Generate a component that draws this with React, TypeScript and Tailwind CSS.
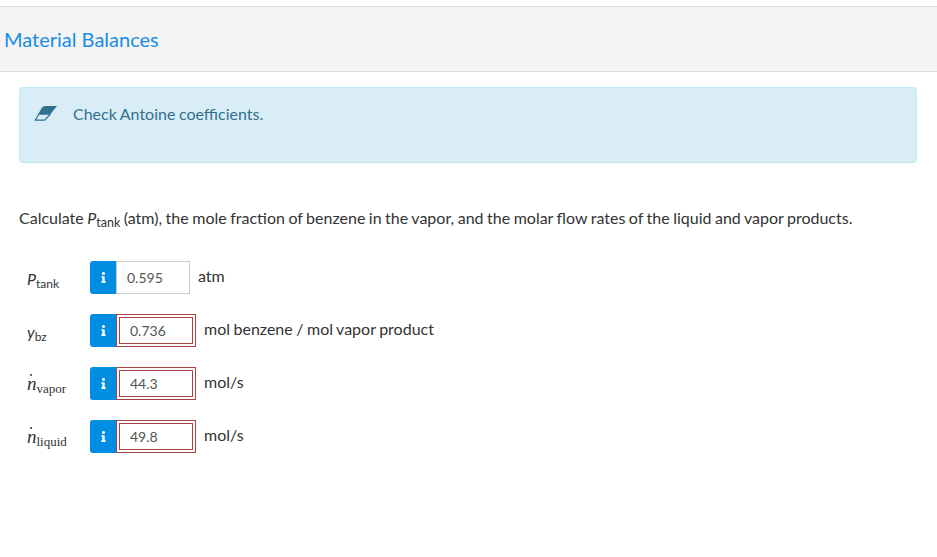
import { FaInfo } from "react-icons/fa";

const rows = [
  { sym: "P", sub: "tank", value: "0.595", unit: "atm", wrong: false, serif: false },
  { sym: "y", sub: "bz", value: "0.736", unit: "mol benzene / mol vapor product", wrong: true, serif: false },
  { sym: "n", sub: "vapor", value: "44.3", unit: "mol/s", wrong: true, serif: true },
  { sym: "n", sub: "liquid", value: "49.8", unit: "mol/s", wrong: true, serif: true },
];

function Eraser() {
  return (
    <svg width="24" height="16" viewBox="0 0 24 16" className="shrink-0">
      <path d="M10 0H23L16 8.8H4.2Z" fill="#31708f" />
      <path d="M9 1L1.2 14.2H10.6L16.5 8" fill="none" stroke="#31708f" strokeWidth="1.2" strokeLinejoin="round" />
    </svg>
  );
}

export default function App() {
  return (
    <div className="min-h-[557px] bg-white pt-[6px] font-['Lato',sans-serif] text-[16px] text-[#333333] [word-spacing:-0.6px]">
      <div className="flex h-[66px] items-center border-y border-[#dddddd] bg-[#f4f4f4] pl-1">
        <h1 className="text-[20px] leading-none text-[#1a8ce6] [word-spacing:0]">Material Balances</h1>
      </div>

      <div className="ml-[19px] mr-[20px] mt-[15px] h-[76px] rounded border border-[#bce8f1] bg-[#d9edf7] text-[#31708f]">
        <div className="flex items-center pl-[14px] pt-[15px]">
          <Eraser />
          <span className="ml-[15px] leading-[22px]">Check Antoine coefficients.</span>
        </div>
      </div>

      <p className="mx-[19px] mt-[44px] leading-[22px]">
        Calculate <i>P</i>
        <sub className="text-[12.5px]">tank</sub> (atm), the mole fraction of benzene in the vapor, and the molar flow rates of the liquid and vapor products.
      </p>

      <div className="mt-[32px] flex flex-col gap-[20px] pl-[27px]">
        {rows.map((row) => (
          <div key={row.sub} className="flex h-[33px] items-center">
            <div className={`relative w-[63px] ${row.serif ? "pt-[1px] font-['Liberation_Serif',serif] text-[19px] leading-[22px]" : "pt-[3px] leading-[22px]"}`}>
              {row.serif && <span className="absolute left-[3px] top-[2px] h-[2px] w-[2px] rounded-full bg-[#333333]" />}
              <i>{row.sym}</i>
              <sub className={row.serif ? "text-[13px]" : "text-[12px]"}>{row.sub}</sub>
            </div>
            <div className="flex h-[33px] w-[26px] items-center justify-center rounded-l-[3px] bg-[#008ee3] text-white">
              <FaInfo className="h-[11px] w-[11px]" />
            </div>
            {row.wrong ? (
              <div className="h-[33px] w-[80px] border border-[#a94442] bg-white p-[2px]">
                <div className="flex h-full items-center border border-[#a94442] pl-[10px] text-[14px] text-[#555555]">{row.value}</div>
              </div>
            ) : (
              <div className="flex h-[33px] w-[74px] items-center border border-[#cccccc] bg-white pl-[10px] text-[14px] text-[#555555]">{row.value}</div>
            )}
            <span className="ml-[8px] -mt-[4px] leading-[22px]">{row.unit}</span>
          </div>
        ))}
      </div>
    </div>
  );
}
